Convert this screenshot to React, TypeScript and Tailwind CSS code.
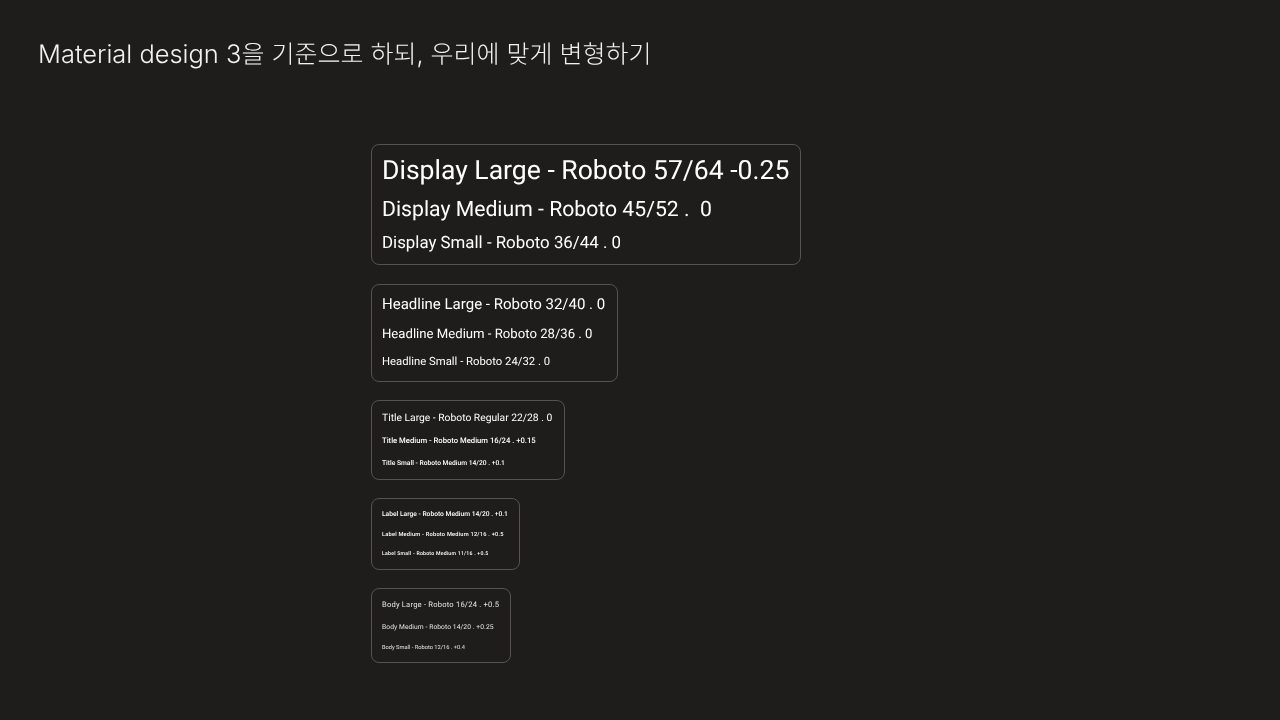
const roboto = "font-['Roboto','Noto_Sans_CJK_KR',sans-serif]";

type Row = { text: string; cls: string };

const groups: { box: string; rows: Row[] }[] = [
  {
    box: "w-[430px] h-[121px] mb-[19px] pt-[8px]",
    rows: [
      { text: "Display Large - Roboto 57/64 -0.25", cls: "text-[26.55px] leading-[36px] h-[36px]" },
      { text: "Display Medium - Roboto 45/52 .\u00a0\u00a00", cls: "text-[21.2px] leading-[42px] h-[40px]" },
      { text: "Display Small - Roboto 36/44 . 0", cls: "text-[16.85px] leading-[29px] h-[29px]" },
    ],
  },
  {
    box: "w-[247px] h-[98px] mb-[18px] pt-[6px]",
    rows: [
      { text: "Headline Large - Roboto 32/40 . 0", cls: "text-[15px] leading-[27px] h-[27px]" },
      { text: "Headline Medium - Roboto 28/36 . 0", cls: "text-[13.15px] leading-[33px] h-[31px]" },
      { text: "Headline Small - Roboto 24/32 . 0", cls: "text-[11.3px] leading-[25px] h-[25px]" },
    ],
  },
  {
    box: "w-[194px] h-[80px] mb-[18px] pt-[6px]",
    rows: [
      { text: "Title Large - Roboto Regular 22/28 . 0", cls: "text-[10.3px] leading-[21px] h-[21px]" },
      { text: "Title Medium - Roboto Medium 16/24 . +0.15", cls: "text-[7.67px] font-medium leading-[25px] h-[25px]" },
      { text: "Title Small - Roboto Medium 14/20 . +0.1", cls: "text-[6.7px] font-medium leading-[20px] h-[19px]" },
    ],
  },
  {
    box: "w-[149px] h-[72px] mb-[18px] pt-[5px]",
    rows: [
      { text: "Label Large - Roboto Medium 14/20 . +0.1", cls: "text-[6.7px] font-medium leading-[20px] h-[20px]" },
      { text: "Label Medium - Roboto Medium 12/16 . +0.5", cls: "text-[5.7px] tracking-[0.2px] font-medium leading-[23px] h-[22px]" },
      { text: "Label Small - Roboto Medium 11/16 . +0.5", cls: "text-[5.2px] tracking-[0.22px] font-medium leading-[17px] h-[15px]" },
    ],
  },
  {
    box: "w-[140px] h-[75px] pt-[5px]",
    rows: [
      { text: "Body Large - Roboto 16/24 . +0.5", cls: "text-[7.6px] tracking-[0.2px] leading-[21px] h-[21px] text-[#e4e4e4]" },
      { text: "Body Medium - Roboto 14/20 . +0.25", cls: "text-[6.7px] tracking-[0.08px] leading-[24px] h-[23px] text-[#e4e4e4]" },
      { text: "Body Small - Roboto 12/16 . +0.4", cls: "text-[5.7px] leading-[21px] h-[19px] text-[#e4e4e4]" },
    ],
  },
];

export default function App() {
  return (
    <div className={`${roboto} min-h-screen bg-[#1e1d1c] text-white overflow-hidden [text-rendering:geometricPrecision]`}>
      <h1 className="pl-[38px] pt-[38px] h-[144px] text-[25.45px] leading-[34px] font-light font-['Inter','Noto_Sans_CJK_KR',sans-serif] text-[#f2f2f2] will-change-transform">
        Material design 3<span className="text-[25px]">을 기준으로 하되, 우리에 맞게 변형하기</span>
      </h1>
      <div className="ml-[371px] flex flex-col items-start">
        {groups.map((g) => (
          <div key={g.box} className={`${g.box} px-[10px] border border-[#55524f] rounded-[8px] whitespace-nowrap will-change-transform`}>
            {g.rows.map((r) => (
              <p key={r.text} className={r.cls}>{r.text}</p>
            ))}
          </div>
        ))}
      </div>
    </div>
  );
}
